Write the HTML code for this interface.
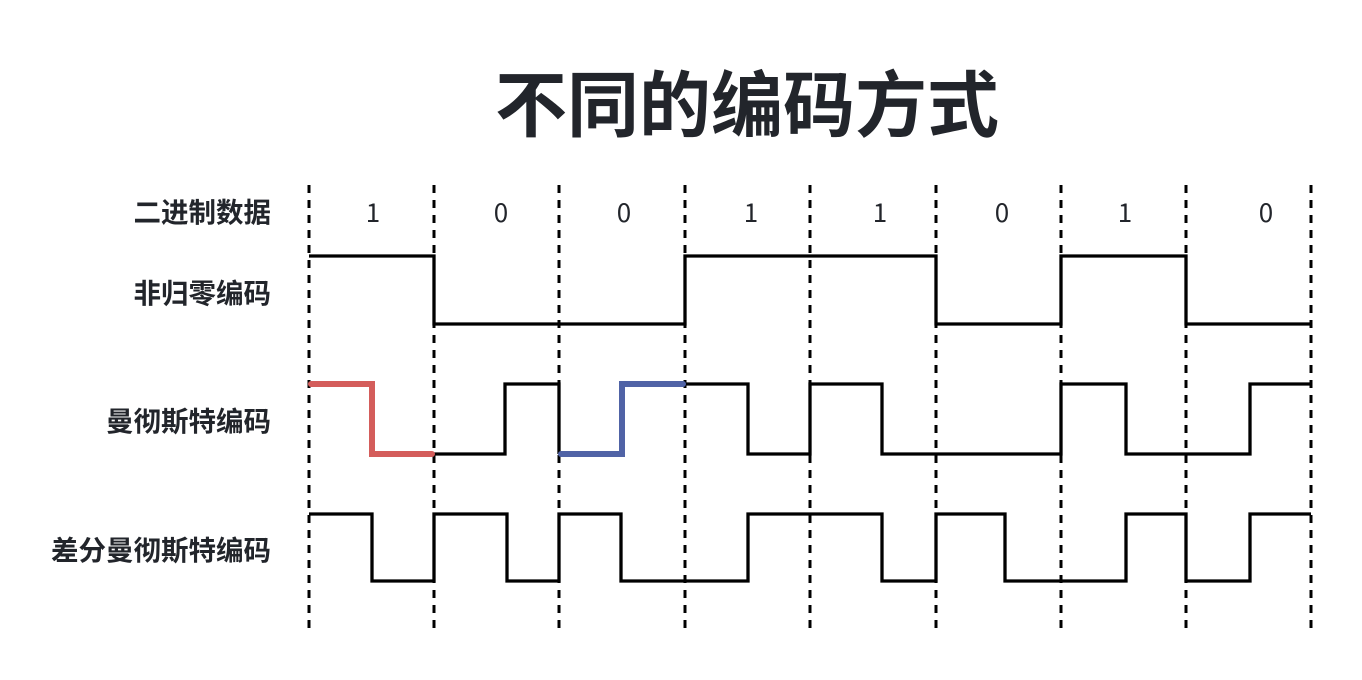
<!DOCTYPE html>
<html><head><meta charset="utf-8"><style>
html,body{margin:0;padding:0;background:#fff;width:1362px;height:680px;overflow:hidden}
svg{display:block}
</style></head><body>
<svg width="1362" height="680" viewBox="0 0 1362 680" xmlns="http://www.w3.org/2000/svg">
<text x="747" y="131" text-anchor="middle" font-family="'Liberation Sans','Noto Sans CJK SC',sans-serif" font-weight="bold" font-size="72" fill="#22252b">不同的编码方式</text>
<g font-family="'Liberation Sans','Noto Sans CJK SC',sans-serif" font-weight="bold" font-size="27.5" fill="#22252b" text-anchor="end">
<text x="271" y="222">二进制数据</text>
<text x="271" y="303">非归零编码</text>
<text x="271" y="431">曼彻斯特编码</text>
<text x="271" y="560">差分曼彻斯特编码</text>
</g>
<g font-family="'Noto Sans CJK SC',sans-serif" font-size="26" fill="#22252b" text-anchor="middle">
<text x="373" y="222">1</text><text x="501" y="222">0</text><text x="624" y="222">0</text><text x="751" y="222">1</text>
<text x="880" y="222">1</text><text x="1002" y="222">0</text><text x="1125" y="222">1</text><text x="1266" y="222">0</text>
</g>
<g stroke="#000" stroke-width="3" stroke-dasharray="8,7">
<line x1="309" y1="185" x2="309" y2="628"/><line x1="434" y1="185" x2="434" y2="628"/>
<line x1="559" y1="185" x2="559" y2="628"/><line x1="685" y1="185" x2="685" y2="628"/>
<line x1="810" y1="185" x2="810" y2="628"/><line x1="936" y1="185" x2="936" y2="628"/>
<line x1="1061" y1="185" x2="1061" y2="628"/><line x1="1186" y1="185" x2="1186" y2="628"/>
<line x1="1311" y1="185" x2="1311" y2="628"/>
</g>
<g fill="none" stroke="#000" stroke-width="3.3">
<polyline points="309,256 434,256 434,324 685,324 685,256 936,256 936,324 1061,324 1061,256 1186,256 1186,324 1311,324"/>
<polyline points="434,454 505,454 505,384 559,384 559,454"/>
<polyline points="685,384 748,384 748,454 810,454 810,384 882,384 882,454 1061,454 1061,384 1126,384 1126,454 1250,454 1250,384 1311,384"/>
<polyline points="309,514 372,514 372,581 434,581 434,514 507,514 507,581 559,581 559,514 621,514 621,581 748,581 748,514 882,514 882,581 936,581 936,514 1005,514 1005,581 1126,581 1126,514 1186,514 1186,581 1250,581 1250,514 1311,514"/>
</g>
<polyline points="311,384 372,384 372,454 432,454" fill="none" stroke="#d45d5b" stroke-width="6" stroke-linecap="round"/>
<polyline points="561,454 622,454 622,384 683,384" fill="none" stroke="#5063a6" stroke-width="6" stroke-linecap="round"/>
</svg>
</body></html>
